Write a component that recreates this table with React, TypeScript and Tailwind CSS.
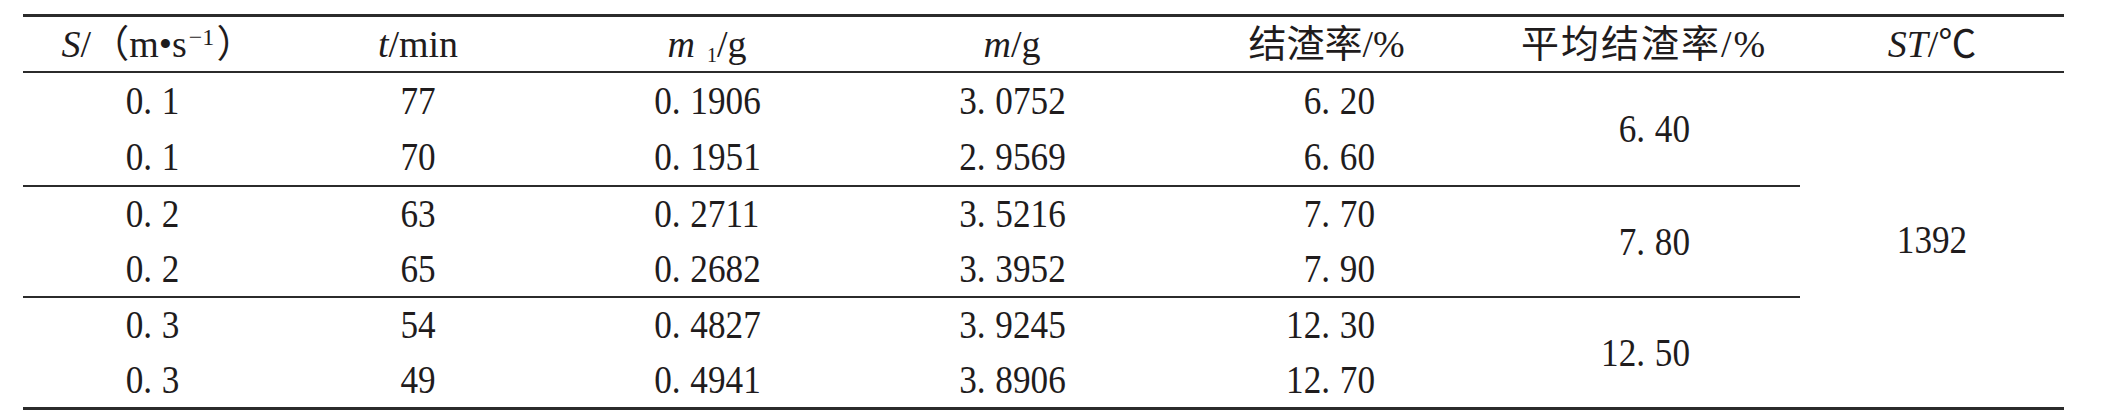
const rows = [
  ["0.1", "77", "0.1906", "3.0752", "6.20"],
  ["0.1", "70", "0.1951", "2.9569", "6.60"],
  ["0.2", "63", "0.2711", "3.5216", "7.70"],
  ["0.2", "65", "0.2682", "3.3952", "7.90"],
  ["0.3", "54", "0.4827", "3.9245", "12.30"],
  ["0.3", "49", "0.4941", "3.8906", "12.70"],
];

const groups = [
  { avg: "6.40", h: "h-[112px]", rows: rows.slice(0, 2) },
  { avg: "7.80", h: "h-[111px]", rows: rows.slice(2, 4) },
  { avg: "12.50", h: "h-[111px]", rows: rows.slice(4, 6) },
];

// decimal point in this typesetting carries a wide gap after it;
// digits are tall and narrow, so squeeze them a little
function Num({ v, right }: { v: string; right?: boolean }) {
  const [a, b] = v.split(".");
  return (
    <span
      className={`inline-block whitespace-nowrap text-[40px] scale-x-[0.88] ${
        right ? "origin-right" : "origin-center"
      }`}
    >
      {a}
      {b !== undefined && (
        <>
          .<span className="inline-block w-[11px]" />
          {b}
        </>
      )}
    </span>
  );
}

const cols = "grid grid-cols-[258px_274px_304px_306px_323px_312px]";

export default function App() {
  return (
    <div className="w-[2110px] h-[418px] bg-white pt-[14px] pl-[23px] text-[#1f1c1d] text-[36px] leading-none font-['Liberation_Serif','Noto_Sans_CJK_SC',serif]">
      <div className="w-[2041px] border-t-[3px] border-b-[3px] border-[#2b2b2b]">
        {/* Header */}
        <div className="grid grid-cols-[258px_274px_304px_306px_323px_312px_264px] h-[56px] border-b-2 border-[#2b2b2b] items-center text-center text-[38px]">
          <div className="whitespace-nowrap pl-[12px]">
            <i>S</i>/（m•s
            <sup className="text-[24px] ml-[2px]">−1</sup>
            <span className="ml-[2px]">）</span>
          </div>
          <div>
            <i>t</i>/min
          </div>
          <div className="whitespace-nowrap">
            <i>m</i>
            <sub className="text-[20px] ml-[12px]">1</sub>/g
          </div>
          <div>
            <i>m</i>/g
          </div>
          <div className="whitespace-nowrap">结渣率/%</div>
          <div className="whitespace-nowrap tracking-[2px]">平均结渣率/%</div>
          <div className="whitespace-nowrap">
            <i>ST</i>/℃
          </div>
        </div>

        {/* Body */}
        <div className="flex">
          <div className="w-[1777px]">
            {groups.map((g, gi) => (
              <div
                key={gi}
                className={`${cols} grid-rows-2 ${g.h} ${gi > 0 ? "border-t-2 border-[#2b2b2b]" : ""}`}
              >
                {g.rows.map((r, ri) => (
                  <div key={ri} className="contents">
                    <div className="flex items-center justify-center">
                      <Num v={r[0]} />
                    </div>
                    <div className="flex items-center justify-center">
                      <Num v={r[1]} />
                    </div>
                    <div className="flex items-center justify-center">
                      <Num v={r[2]} />
                    </div>
                    <div className="flex items-center justify-center">
                      <Num v={r[3]} />
                    </div>
                    <div className="flex items-center justify-end pr-[113px]">
                      <Num v={r[4]} right />
                    </div>
                    {ri === 0 && (
                      <div className="row-span-2 flex items-center justify-end pr-[110px]">
                        <Num v={g.avg} right />
                      </div>
                    )}
                  </div>
                ))}
              </div>
            ))}
          </div>
          <div className="w-[264px] flex items-center justify-center">
            <Num v="1392" />
          </div>
        </div>
      </div>
    </div>
  );
}
